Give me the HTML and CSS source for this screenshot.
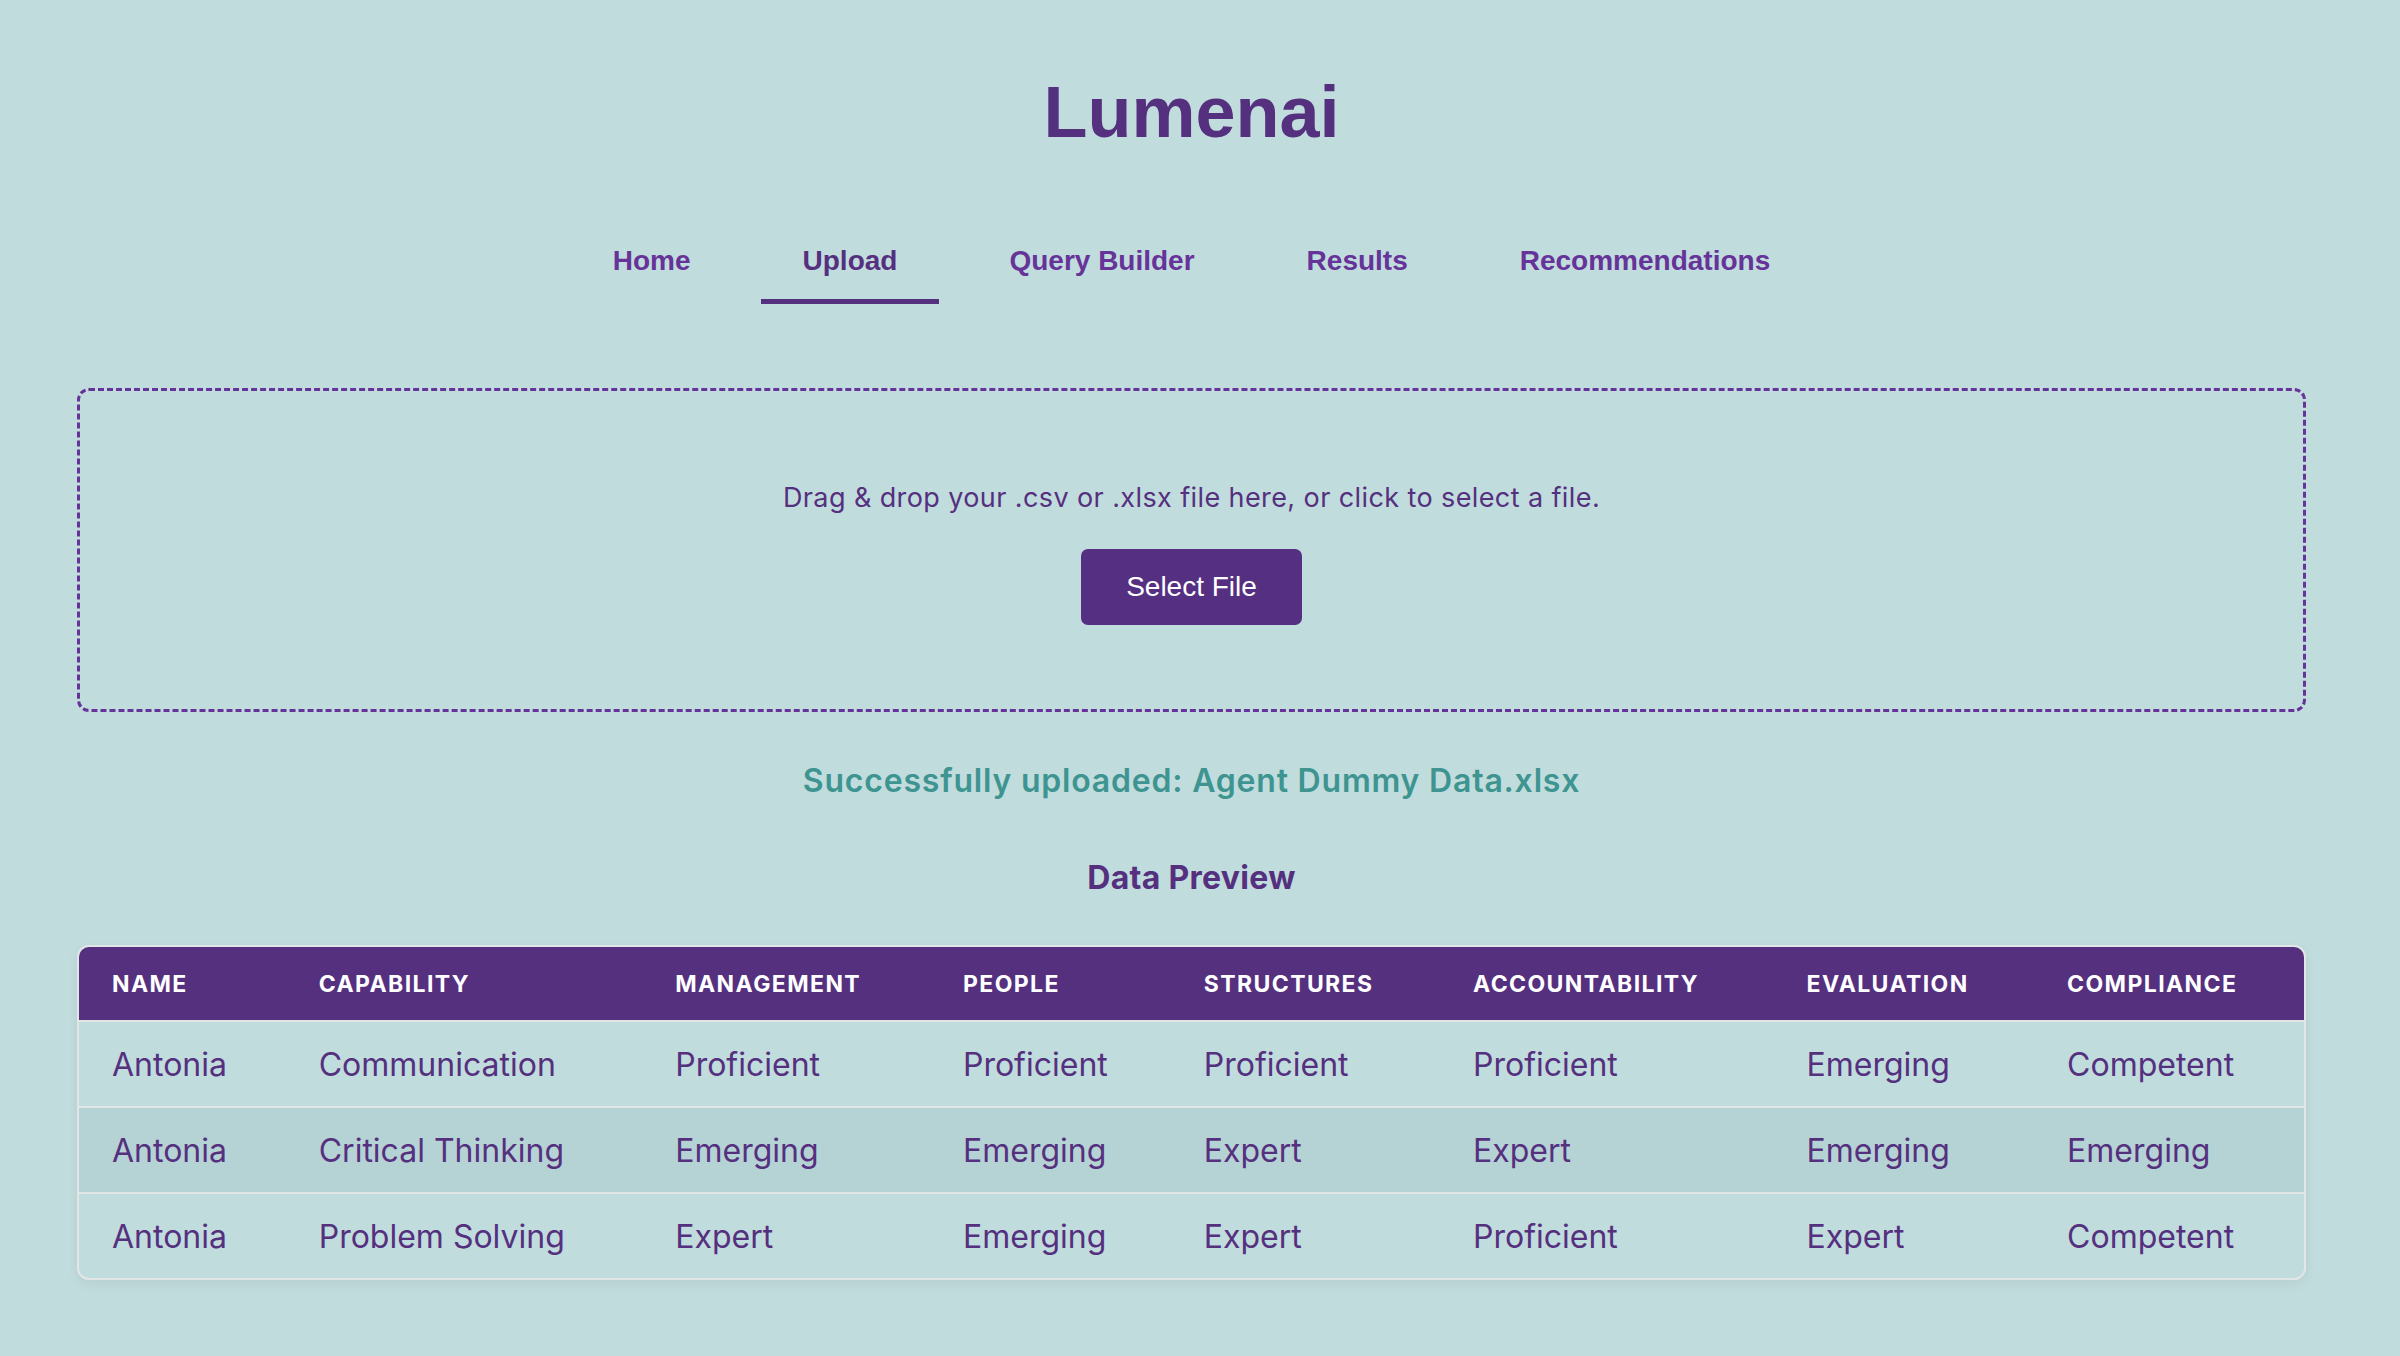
FILE: index.html
```html
<!DOCTYPE html>
<html lang="en">
<head>
  <meta charset="UTF-8" />
  <meta name="viewport" content="width=device-width, initial-scale=1.0" />
  <title>Lumenai - Upload</title>
  <link rel="stylesheet" href="styles.css">
</head>
<body>

  <div class="app">
    <header>
      <h1>Lumenai</h1>
      <nav>
        <a href="#">Home</a>
        <a href="#" class="active">Upload</a>
        <a href="#">Query Builder</a>
        <a href="#">Results</a>
        <a href="#">Recommendations</a>
      </nav>
    </header>

    <div class="dropzone">
      <p>Drag &amp; drop your .csv or .xlsx file here, or click to select a file.</p>
      <button>Select File</button>
    </div>

    <p class="status">Successfully uploaded: Agent Dummy Data.xlsx</p>

    <h2>Data Preview</h2>

    <table class="preview">
      <thead>
        <tr>
          <th>Name</th>
          <th>Capability</th>
          <th>Management</th>
          <th>People</th>
          <th>Structures</th>
          <th>Accountability</th>
          <th>Evaluation</th>
          <th>Compliance</th>
        </tr>
      </thead>
      <tbody>
        <tr>
          <td>Antonia</td>
          <td>Communication</td>
          <td>Proficient</td>
          <td>Proficient</td>
          <td>Proficient</td>
          <td>Proficient</td>
          <td>Emerging</td>
          <td>Competent</td>
        </tr>
        <tr>
          <td>Antonia</td>
          <td>Critical Thinking</td>
          <td>Emerging</td>
          <td>Emerging</td>
          <td>Expert</td>
          <td>Expert</td>
          <td>Emerging</td>
          <td>Emerging</td>
        </tr>
        <tr>
          <td>Antonia</td>
          <td>Problem Solving</td>
          <td>Expert</td>
          <td>Emerging</td>
          <td>Expert</td>
          <td>Proficient</td>
          <td>Expert</td>
          <td>Competent</td>
        </tr>
      </tbody>
    </table>
  </div>

</body>
</html>
```

FILE: styles.css
```css
html, body {
  margin: 0;
}

body {
  font-family: 'Inter', sans-serif;
  background-color: #c1dcdd;
  color: #55307f;
}

.app {
  box-sizing: border-box;
  width: 2383px; /* page width without the scrollbar */
  padding: 76px 77px 60px;
}

header {
  text-align: center;
}

h1 {
  margin: 0;
  font-family: 'Liberation Sans', Arial, sans-serif;
  font-size: 72px;
  line-height: 72px;
  font-weight: bold;
  color: #55307f;
}

nav {
  display: flex;
  justify-content: center;
  gap: 28px;
  margin-top: 75px;
}

nav a {
  padding: 22px 42px;
  font-family: 'Liberation Sans', Arial, sans-serif;
  font-size: 28px;
  line-height: 32px;
  font-weight: bold;
  color: #663399;
  text-decoration: none;
  border-bottom: 5px solid transparent;
}

nav a.active {
  color: #55307f;
  border-bottom-color: #55307f;
}

.dropzone {
  margin-top: 84px;
  padding: 87px 40px 84px;
  border: 3px dashed #663399;
  border-radius: 12px;
  text-align: center;
}

.dropzone p {
  margin: 0 0 30px;
  font-size: 27px;
  line-height: 1.5;
  letter-spacing: 0.4px;
  color: #55307f;
}

button {
  padding: 22px 45px;
  background-color: #552f81;
  color: white;
  border: none;
  border-radius: 7px;
  font-family: 'Liberation Sans', Arial, sans-serif;
  font-size: 28px;
  line-height: 32px;
  cursor: pointer;
}

.status {
  margin: 50px 0 0;
  text-align: center;
  font-size: 32px;
  line-height: 38px;
  font-weight: 600;
  letter-spacing: 0.8px;
  color: #3d9490;
}

h2 {
  margin: 59px 0 48px;
  text-align: center;
  font-size: 32px;
  line-height: 1.2;
  font-weight: bold;
  letter-spacing: 0.3px;
}

.preview {
  width: 100%;
  border-collapse: separate;
  border-spacing: 0;
  border: 2px solid #e3e6e6;
  border-radius: 12px;
  overflow: hidden;
  box-shadow: 0 4px 12px rgba(0, 0, 0, 0.06);
}

.preview th,
.preview td {
  text-align: left;
  padding: 23px 33px 22px;
  border-bottom: 2px solid #e3e6e6;
  white-space: nowrap;
}

.preview th {
  background-color: #55307f;
  color: white;
  font-size: 23px;
  font-weight: bold;
  text-transform: uppercase;
  letter-spacing: 1.4px;
}

.preview td {
  font-size: 32px;
  color: #55307f;
}

.preview tbody tr:nth-child(even) td {
  background-color: #b5d3d4;
}

.preview tbody tr:last-child td {
  border-bottom: none;
}
```
